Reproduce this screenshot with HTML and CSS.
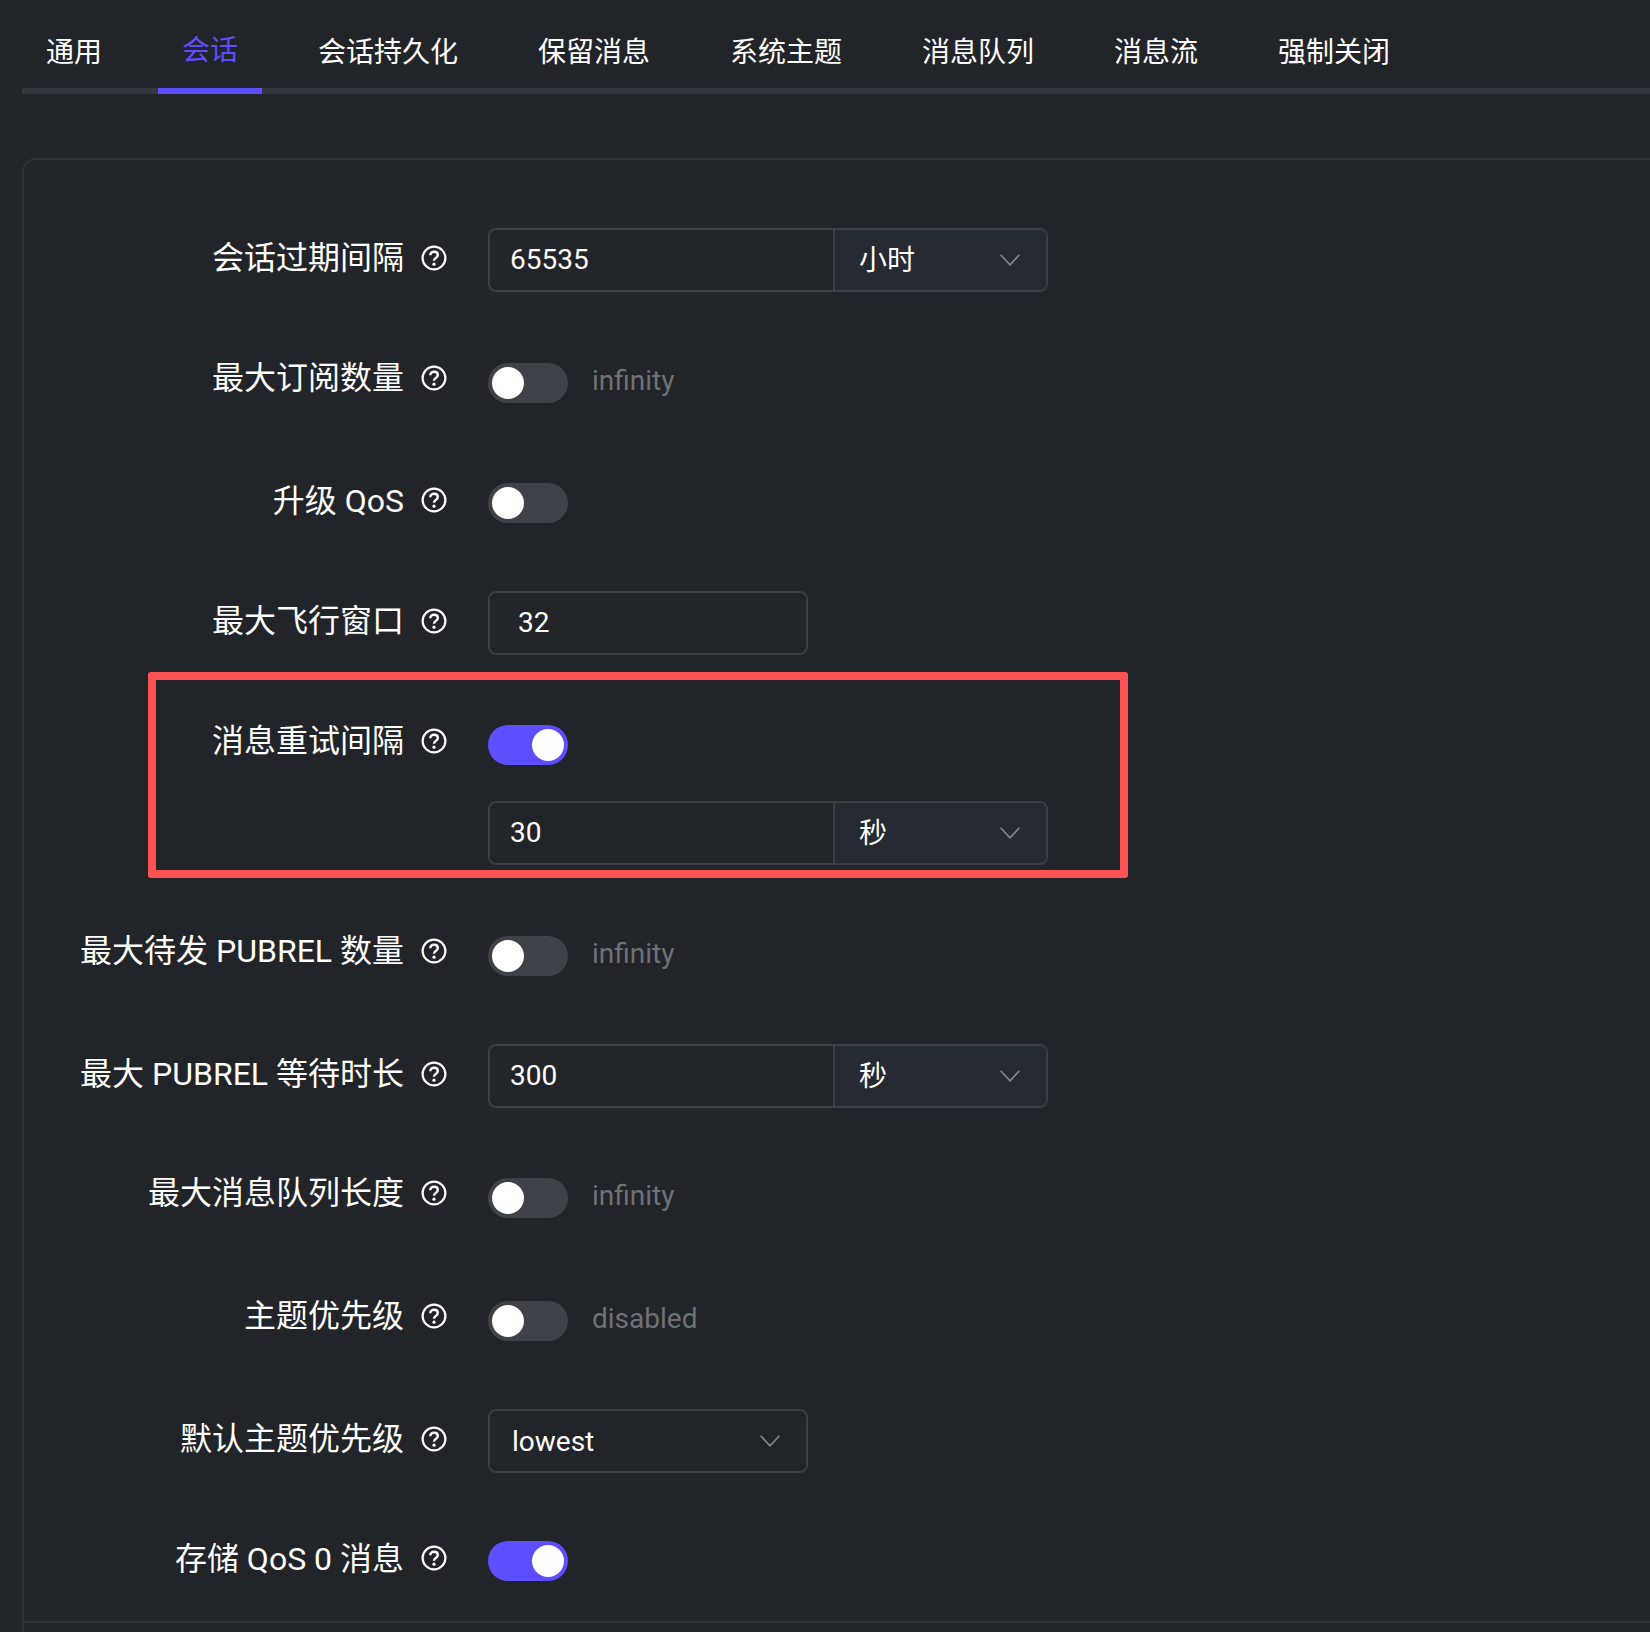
FILE: index.html
```html
<!DOCTYPE html>
<html lang="zh-CN">
  <head>
    <meta charset="UTF-8" />
    <title>会话设置</title>
    <link rel="stylesheet" href="styles.css">
  </head>
  <body>
    <svg class="icon-defs" width="0" height="0">
      <symbol id="help" viewBox="0 0 26 26">
        <circle cx="13" cy="13" r="11.4" fill="none" stroke="currentColor" stroke-width="2.2"/>
        <path d="M9.3 10.3c0-2.2 1.6-3.6 3.8-3.6s3.7 1.3 3.7 3.2c0 1.5-.8 2.3-2 3.1-1.2.8-1.8 1.4-1.8 2.8" fill="none" stroke="currentColor" stroke-width="2.4"/>
        <circle cx="13" cy="19.2" r="1.6" fill="currentColor"/>
      </symbol>
      <symbol id="chevron" viewBox="0 0 20 12">
        <path d="M.6.8 10 10.8 19.4.8" fill="none" stroke="currentColor" stroke-width="1.6"/>
      </symbol>
    </svg>

    <div class="tabs">
      <a class="tab">通用</a>
      <a class="tab active">会话</a>
      <a class="tab">会话持久化</a>
      <a class="tab">保留消息</a>
      <a class="tab">系统主题</a>
      <a class="tab">消息队列</a>
      <a class="tab">消息流</a>
      <a class="tab">强制关闭</a>
    </div>

    <div class="panel">
      <div class="row">
        <div class="label"><span class="label-text">会话过期间隔</span><svg class="help"><use href="#help"/></svg></div>
        <div class="control">
          <div class="combo">
            <div class="combo-value">65535</div>
            <div class="combo-unit">小时<svg class="chevron"><use href="#chevron"/></svg></div>
          </div>
        </div>
      </div>

      <div class="row row-switch row-short">
        <div class="label"><span class="label-text">最大订阅数量</span><svg class="help"><use href="#help"/></svg></div>
        <div class="control">
          <span class="switch"></span><span class="hint">infinity</span>
        </div>
      </div>

      <div class="row row-switch row-qos">
        <div class="label"><span class="label-text">升级 QoS</span><svg class="help"><use href="#help"/></svg></div>
        <div class="control">
          <span class="switch"></span>
        </div>
      </div>

      <div class="row">
        <div class="label"><span class="label-text">最大飞行窗口</span><svg class="help"><use href="#help"/></svg></div>
        <div class="control">
          <div class="box box-number">32</div>
        </div>
      </div>

      <div class="row row-marked">
        <div class="label"><span class="label-text">消息重试间隔</span><svg class="help"><use href="#help"/></svg></div>
        <div class="control control-stack">
          <span class="switch on"></span>
          <div class="combo">
            <div class="combo-value">30</div>
            <div class="combo-unit">秒<svg class="chevron"><use href="#chevron"/></svg></div>
          </div>
        </div>
      </div>

      <div class="row row-switch">
        <div class="label"><span class="label-text">最大待发 PUBREL 数量</span><svg class="help"><use href="#help"/></svg></div>
        <div class="control">
          <span class="switch"></span><span class="hint">infinity</span>
        </div>
      </div>

      <div class="row">
        <div class="label"><span class="label-text">最大 PUBREL 等待时长</span><svg class="help"><use href="#help"/></svg></div>
        <div class="control">
          <div class="combo">
            <div class="combo-value">300</div>
            <div class="combo-unit">秒<svg class="chevron"><use href="#chevron"/></svg></div>
          </div>
        </div>
      </div>

      <div class="row row-switch row-pull">
        <div class="label"><span class="label-text">最大消息队列长度</span><svg class="help"><use href="#help"/></svg></div>
        <div class="control">
          <span class="switch"></span><span class="hint">infinity</span>
        </div>
      </div>

      <div class="row row-switch">
        <div class="label"><span class="label-text">主题优先级</span><svg class="help"><use href="#help"/></svg></div>
        <div class="control">
          <span class="switch"></span><span class="hint">disabled</span>
        </div>
      </div>

      <div class="row">
        <div class="label"><span class="label-text">默认主题优先级</span><svg class="help"><use href="#help"/></svg></div>
        <div class="control">
          <div class="box box-select">lowest<svg class="chevron"><use href="#chevron"/></svg></div>
        </div>
      </div>

      <div class="row row-switch row-qos row-last">
        <div class="label"><span class="label-text">存储 QoS 0 消息</span><svg class="help"><use href="#help"/></svg></div>
        <div class="control">
          <span class="switch on"></span>
        </div>
      </div>

      <div class="panel-foot"></div>
    </div>
  </body>
</html>
```

FILE: styles.css
```css
*,
*::after {
  box-sizing: border-box;
}

html,
body {
  height: 100%;
}

body {
  margin: 0;
  overflow: hidden;
  background: #212429;
  color: #fff;
  font-family: Roboto, "Noto Sans CJK SC", sans-serif;
  font-size: 28px;
}

.icon-defs {
  position: absolute;
}

.tabs {
  display: flex;
  gap: 32px;
  height: 94px;
  margin-left: 22px;
  border-bottom: 6px solid #34373d;
}

.tab {
  height: 94px;
  padding: 0 24px;
  line-height: 106px;
  white-space: nowrap;
}

.tab.active {
  color: #5d4fff;
  border-bottom: 6px solid #5d4fff;
  line-height: 102px;
}

.panel {
  position: relative;
  width: 1700px;
  height: 1500px;
  margin: 64px 0 0 22px;
  padding-top: 68px;
  border: 2px solid #2e3137;
  border-radius: 14px;
}

.row {
  display: flex;
  align-items: flex-start;
  margin-bottom: 56px;
}

.row-switch .control {
  padding-top: 15px;
  height: 67px;
}

.row-short .control {
  height: 64px;
}

.row-pull {
  margin-top: -1px;
}

.label {
  display: flex;
  justify-content: flex-end;
  align-items: center;
  flex: 0 0 464px;
  height: 60px;
  padding-right: 41px;
  font-size: 32px;
  white-space: nowrap;
}

.label-text {
  margin-bottom: 6px;
}

.row-qos .label {
  height: 64px;
}

.row-qos .label-text {
  margin-bottom: 4px;
}

.help {
  flex: none;
  width: 26px;
  height: 26px;
  margin-left: 17px;
}

.control {
  display: flex;
  align-items: flex-start;
}

.control-stack {
  flex-direction: column;
  gap: 36px;
  padding-top: 14px;
}

/* the red box drawn over the retry row */
.row-marked::after {
  content: "";
  position: absolute;
  left: 124px;
  top: 512px;
  width: 980px;
  height: 206px;
  border: 8px solid #ff5252;
  border-radius: 3px;
}

.row-last {
  margin-top: -3px;
  margin-bottom: 0;
}

.switch {
  position: relative;
  flex: none;
  width: 80px;
  height: 40px;
  border-radius: 20px;
  background: #3f4349;
}

.switch::after {
  content: "";
  position: absolute;
  left: 4px;
  top: 4px;
  width: 32px;
  height: 32px;
  border-radius: 50%;
  background: #fff;
}

.switch.on {
  background: #5d4fff;
}

.switch.on::after {
  left: 44px;
}

.hint {
  margin-left: 24px;
  margin-top: 1px;
  line-height: 34px;
  color: #6e7176;
}

.combo {
  display: flex;
  width: 560px;
  height: 64px;
  border: 2px solid #3c3f45;
  border-radius: 8px;
  overflow: hidden;
}

.combo-value {
  width: 345px;
  padding-left: 20px;
  line-height: 60px;
  border-right: 2px solid #3c3f45;
}

.combo-unit {
  position: relative;
  flex: 1;
  padding-left: 24px;
  line-height: 62px;
  background: #262a32;
}

.chevron {
  position: absolute;
  top: 24px;
  right: 26px;
  width: 20px;
  height: 12px;
  color: #85888d;
}

.box {
  position: relative;
  width: 320px;
  height: 64px;
  border: 2px solid #3c3f45;
  border-radius: 8px;
  line-height: 60px;
}

.box-number {
  padding-left: 28px;
}

.box-select {
  padding-left: 22px;
  line-height: 62px;
}

.panel-foot {
  position: absolute;
  left: 0;
  right: 0;
  top: 1461px;
  border-top: 2px solid #2e3137;
}
```
